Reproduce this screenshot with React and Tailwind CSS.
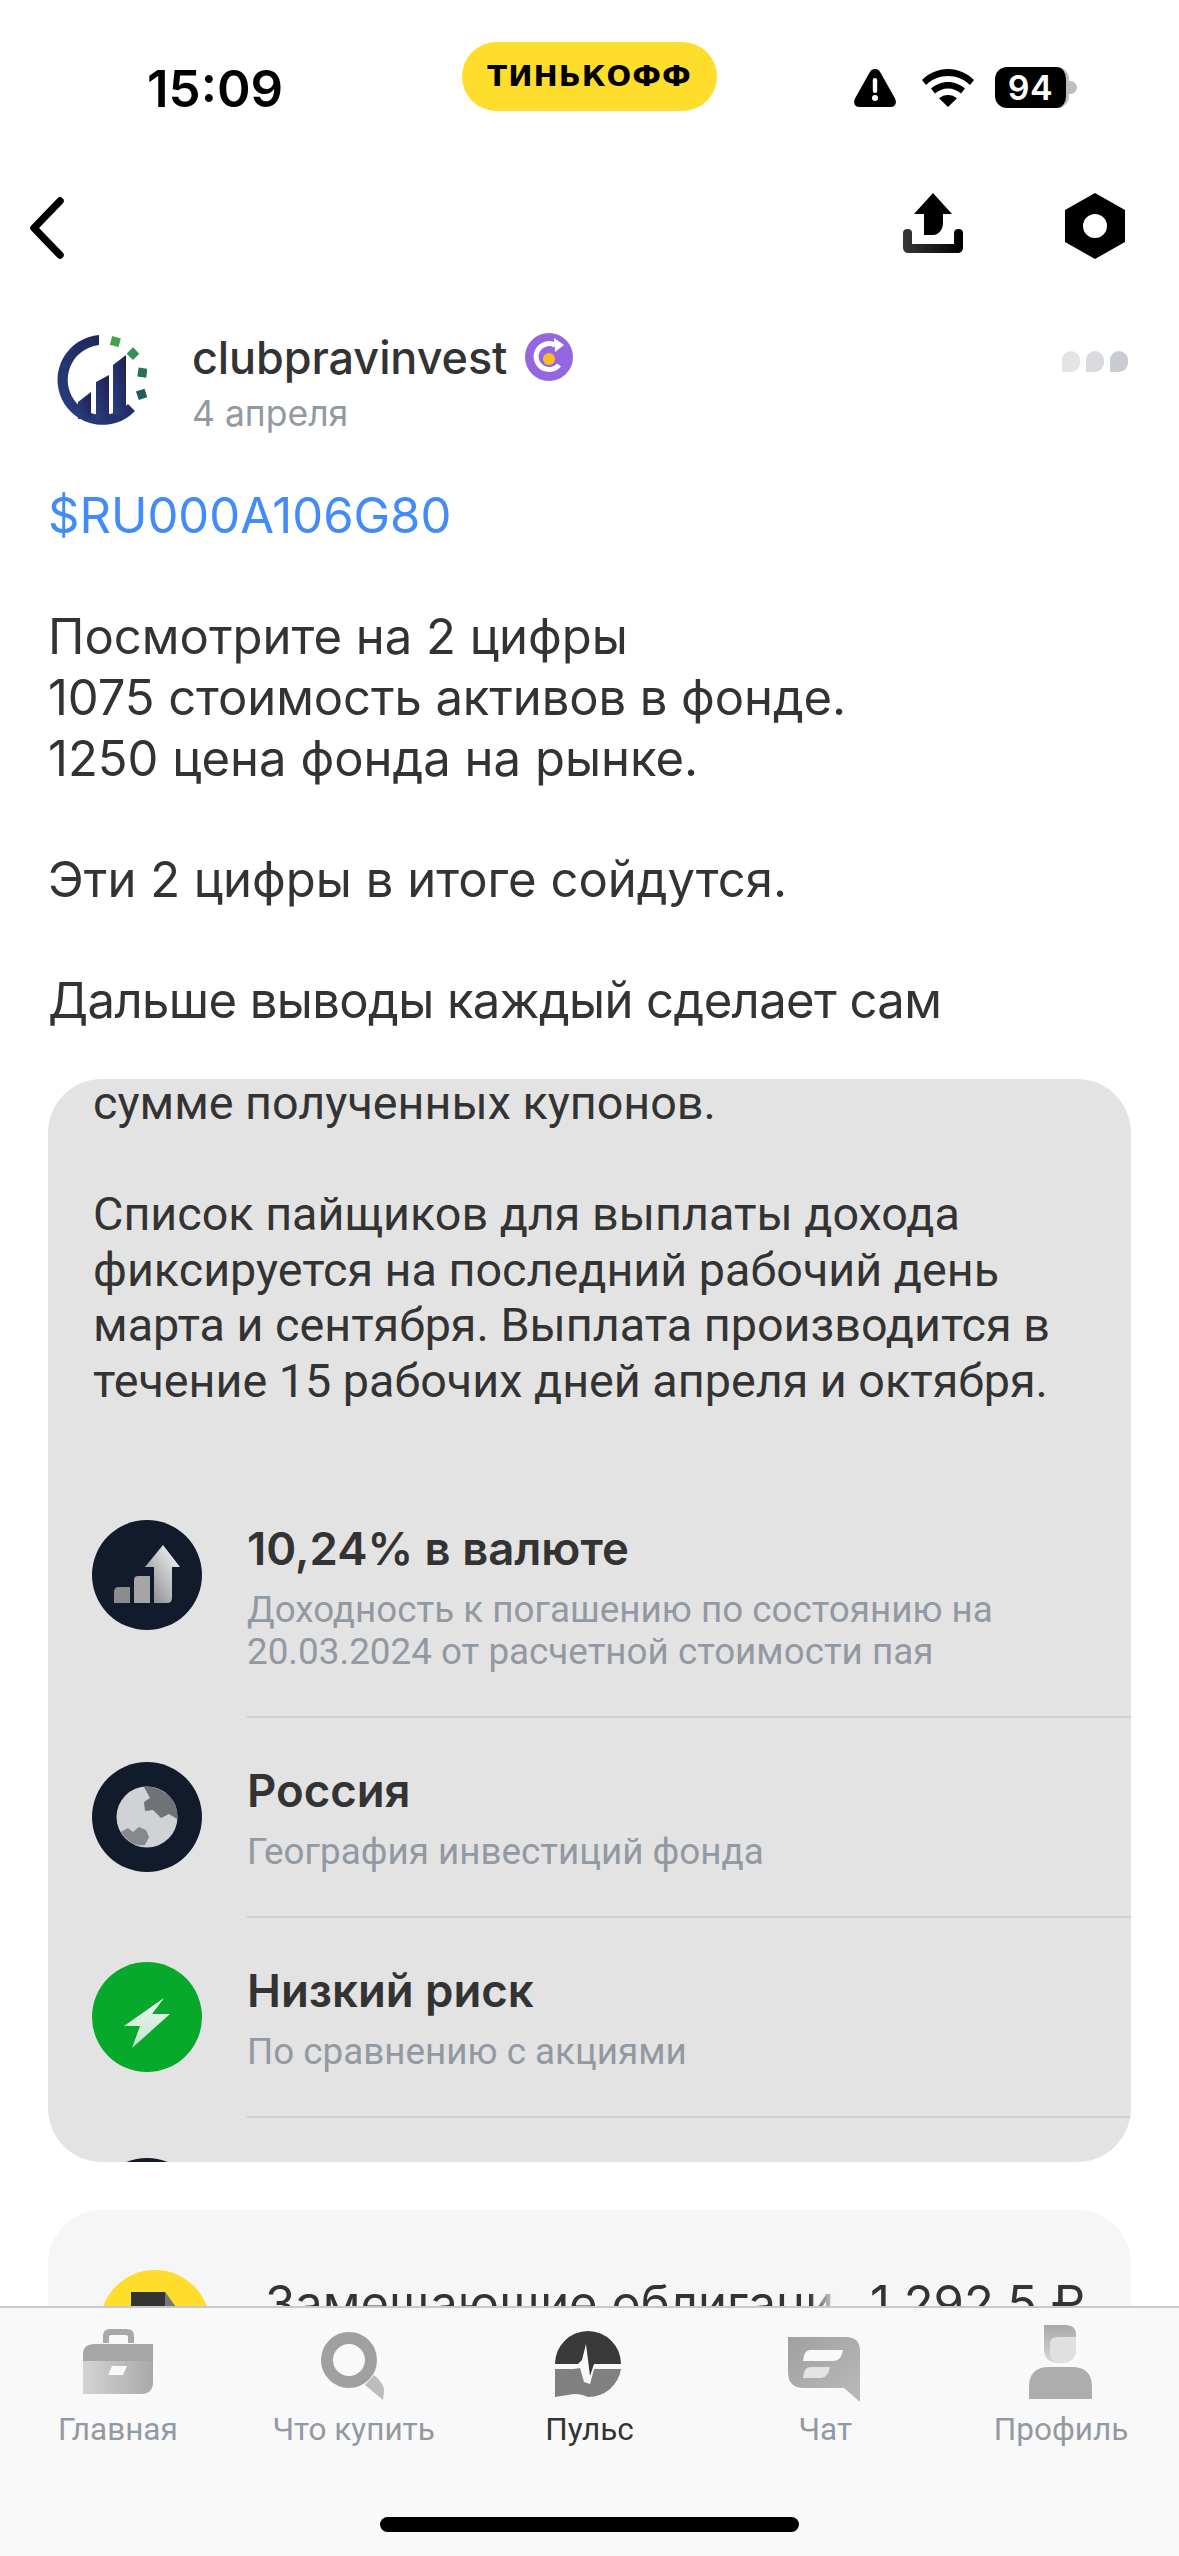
import React from "react";

function Row({ icon, title, sub, first }) {
  return (
    <div className={"flex " + (first ? "mt-[67px]" : "")}>
      <div className="w-[199px] shrink-0 pl-[44px] pt-[44px]">{icon}</div>
      <div className="flex-1 border-b-[2px] border-[#cfcfcf] pt-[47px] pb-[43px]">
        <div className="font-['Inter',sans-serif] text-[45.500px] leading-[52px] font-semibold text-[#333]">{title}</div>
        <div className="mt-[14px] text-[36.800px] leading-[42px] text-[#9299a2]">{sub}</div>
      </div>
    </div>
  );
}

function Circle({ className, children }) {
  return <div className={"w-[110px] h-[110px] rounded-full overflow-hidden " + className}>{children}</div>;
}

function Tab({ label, active, children }) {
  return (
    <div className="flex flex-col items-center">
      <svg width="90" height="80" viewBox="0 0 90 80">{children}</svg>
      <div className={"mt-[8px] font-['Roboto',sans-serif] text-[31.500px] leading-[36px] " + (active ? "text-[#333]" : "text-[#9299a2]")}>{label}</div>
    </div>
  );
}

export default function App() {
  return (
    <div className="relative w-[1179px] h-[2556px] overflow-hidden bg-white font-['Inter','Noto_Sans',sans-serif] text-[#333]">
      {/* status bar */}
      <div className="flex items-start h-[166px]">
        <div className="w-[462px] shrink-0 pl-[147px] pt-[59px] text-[51px] leading-[60px] font-semibold text-black">15:09</div>
        <div className="mt-[42px] w-[255px] h-[69px] shrink-0 rounded-full bg-[#ffdd2d] flex items-center justify-center font-['DejaVu_Sans',sans-serif] text-[29px] font-bold tracking-[1px] text-black">ТИНЬКОФФ</div>
        <div className="ml-[136px] mt-[67px] h-[41px] flex items-center">
          <svg width="44" height="38" viewBox="0 0 44 38"><path d="M22 0c3 0 4.500 2 6 4.500l14 25c2 4 .5 8.500-4 8.500H6c-4.500 0-6-4.500-4-8.500l14-25C17.500 2 19 0 22 0z" fill="#000"/><rect x="19.800" y="9" width="4.400" height="15" rx="2.200" fill="#fff"/><circle cx="22" cy="29" r="3" fill="#fff"/></svg>
          <svg className="ml-[25px]" width="52" height="38" viewBox="0 0 52 38"><path d="M26 0c10 0 19 4 26 11l-4 5C42 10 34 7 26 7S10 10 4 16l-4-5C7 4 16 0 26 0z" fill="#000"/><path d="M26 13c6.500 0 12 2.500 17 6.500l-4 5c-3.500-3-8-5-13-5s-9.500 2-13 5l-4-5c5-4 10.500-6.500 17-6.500z" fill="#000"/><path d="M26 26c3.500 0 6.500 1.200 9 3.300L26 38l-9-8.700c2.500-2.100 5.500-3.300 9-3.300z" fill="#000"/></svg>
          <div className="ml-[21px] w-[74px] h-[41px] rounded-[12px] bg-black border-r-[3px] border-[#bdbdbd] flex items-center justify-center text-[34px] leading-[41px] font-semibold tracking-[0.5px] text-white">94</div>
          <div className="w-[8px] h-[13px] rounded-r-full bg-[#bdbdbd]"></div>
        </div>
      </div>

      {/* nav */}
      <div className="flex items-start h-[120px] pt-[27px]">
        <svg className="ml-[27px] mt-[3px]" width="40" height="64" viewBox="0 0 40 64"><path d="M33 5 7 32l26 27" fill="none" stroke="#000" strokeWidth="7.500" strokeLinecap="round" strokeLinejoin="round"/></svg>
        <svg className="ml-[836px]" width="60" height="60" viewBox="0 0 60 60">
          <defs><linearGradient id="tray" x1="0" y1="0" x2="1" y2="0"><stop offset="0" stopColor="#383838"/><stop offset="1" stopColor="#000"/></linearGradient></defs>
          <path d="M30 0 49 21H40V30C40 36 36 42 30 42H21V21H11z" fill="#000"/>
          <path d="M0 40c0-2.500 1.500-4 4.500-4S9 37.500 9 40v11h42V40c0-2.500 1.500-4 4.500-4s4.500 1.500 4.500 4v14c0 4-2 6-6 6H6c-4 0-6-2-6-6z" fill="url(#tray)"/>
        </svg>
        <svg className="ml-[102px]" width="60" height="66" viewBox="0 0 60 66"><path fillRule="evenodd" d="M30 0 60 17V49L30 66 0 49V17zM30 21a12 12 0 1 0 0 24 12 12 0 0 0 0-24z" fill="#000"/></svg>
      </div>

      {/* author */}
      <div className="flex items-start pt-[49px] pl-[57px] pr-[51px]">
        <svg className="shrink-0" width="90" height="90" viewBox="0 0 90 90">
          <defs><linearGradient id="lg" x1="0" y1="1" x2="1" y2="0"><stop offset="0" stopColor="#2b4084"/><stop offset="1" stopColor="#1d1f4e"/></linearGradient></defs>
          <path d="M42 0A45 45 0 1 0 78 76L71 69A35 35 0 1 1 42 10Z" fill="url(#lg)"/>
          <path d="M21 67 34 57V84H21z" fill="url(#lg)"/>
          <path d="M39 47 52 40V84H39z" fill="url(#lg)"/>
          <path d="M56 30 69 20V80H56z" fill="url(#lg)"/>
          <rect x="54" y="2" width="9" height="9" transform="rotate(15 58 6)" fill="#44a347"/>
          <rect x="72" y="14" width="9" height="9" transform="rotate(45 76 18)" fill="#3a8f58"/>
          <rect x="81" y="33" width="9" height="9" transform="rotate(8 85 37)" fill="#2b6e5b"/>
          <rect x="80" y="55" width="9" height="9" transform="rotate(-18 84 59)" fill="#235a5c"/>
        </svg>
        <div className="ml-[45px] -mt-[3px]">
          <div className="flex items-center h-[52px]">
            <span className="text-[45px] leading-[52px] font-medium tracking-[-0.1px] text-[#333]">clubpravinvest</span>
            <svg className="ml-[18px] -mt-[2px]" width="48" height="48" viewBox="0 0 48 48"><circle cx="24" cy="24" r="24" fill="#9467e0"/><path d="M34 32A13 13 0 1 1 30 12" fill="none" stroke="#fff" strokeWidth="5"/><path d="M29 5l10 7-9 7z" fill="#fff"/><circle cx="24" cy="26" r="6" fill="#fcbc23"/></svg>
          </div>
          <div className="mt-[9px] text-[35.500px] leading-[42px] text-[#9299a2]">4 апреля</div>
        </div>
        <div className="ml-auto mt-[16px] flex gap-[6px]">
          <div className="w-[18px] h-[21px] rounded-t-[9px] rounded-br-[9px] bg-[#e3e4e6]"></div>
          <div className="w-[18px] h-[21px] rounded-t-[9px] rounded-br-[9px] bg-[#d8dadd]"></div>
          <div className="w-[18px] h-[21px] rounded-t-[9px] rounded-br-[9px] bg-[#c9ccd1]"></div>
        </div>
      </div>

      {/* post */}
      <div className="px-[48px] mt-[50px] text-[49px] leading-[61px] text-[#333]">
        <div className="text-[#428bf9]">$RU000A106G80</div>
        <div className="h-[60px]"></div>
        <div>Посмотрите на 2 цифры</div>
        <div className="tracking-[-0.1px]">1075 стоимость активов в фонде.</div>
        <div>1250 цена фонда на рынке.</div>
        <div className="h-[60px]"></div>
        <div>Эти 2 цифры в итоге сойдутся.</div>
        <div className="h-[60px]"></div>
        <div className="tracking-[-0.6px]">Дальше выводы каждый сделает сам</div>
      </div>

      {/* image card */}
      <div className="mx-[48px] mt-[48px] h-[1083px] rounded-[54px] bg-[#e3e3e3] overflow-hidden font-['Roboto',sans-serif]">
        <div className="px-[45px] pt-[2px] text-[46.700px] leading-[55.500px] text-[#333]">
          <div className="leading-[44px]">сумме полученных купонов.</div>
          <div className="h-[62px]"></div>
          <div>Список пайщиков для выплаты дохода</div>
          <div>фиксируется на последний рабочий день</div>
          <div>марта и сентября. Выплата производится в</div>
          <div>течение 15 рабочих дней апреля и октября.</div>
        </div>
        <Row
          first
          title="10,24% в валюте"
          sub={<>Доходность к погашению по состоянию на<br />20.03.2024 от расчетной стоимости пая</>}
          icon={
            <Circle className="bg-[#121b2c]">
              <svg width="110" height="110" viewBox="0 0 110 110">
                <defs><linearGradient id="up" x1="0" y1="1" x2="1" y2="0"><stop offset="0" stopColor="#7d7f84"/><stop offset="1" stopColor="#ffffff"/></linearGradient></defs>
                <path d="M22 72q0-5 5-5h11v16H22z" fill="#8a8c90"/>
                <path d="M42 60q0-4 4-4h12v27H42z" fill="#a4a5a8"/>
                <path d="M71 25 88 47H80V78q0 5-5 5H62V47H53z" fill="url(#up)"/>
              </svg>
            </Circle>
          }
        />
        <Row
          title="Россия"
          sub="География инвестиций фонда"
          icon={
            <Circle className="bg-[#121b2c]">
              <svg width="110" height="110" viewBox="0 0 110 110">
                <circle cx="55" cy="55" r="30.500" fill="#d0d2d5"/>
                <path d="M52 25c5-2 20 2 28 12 4 5 6 12 5 20l-8-5-8 4-8-8-8 1-1-9 6-4z" fill="#6f7276"/>
                <path d="M29 70l7-4 5 4 6-5 7 3 3 7-4 8c-10 2-19-5-24-13z" fill="#85888c"/>
              </svg>
            </Circle>
          }
        />
        <Row
          title="Низкий риск"
          sub="По сравнению с акциями"
          icon={
            <Circle className="bg-[#07a92c]">
              <svg width="110" height="110" viewBox="0 0 110 110">
                <defs><linearGradient id="bolt" x1="0" y1="0" x2="0" y2="1"><stop offset="0" stopColor="#f0f8f2"/><stop offset="1" stopColor="#c2e4ca"/></linearGradient></defs>
                <path d="M72 36 32 64H48L40 86 78 52H60z" fill="url(#bolt)"/>
              </svg>
            </Circle>
          }
        />
        <div className="pl-[44px] pt-[40px]"><Circle className="bg-[#121b2c]" /></div>
      </div>

      {/* second card */}
      <div className="mx-[48px] mt-[48px] h-[240px] rounded-[54px] bg-[#f6f6f6] overflow-hidden flex items-start pt-[60px] pl-[52px]">
        <div className="shrink-0 w-[110px] h-[110px] rounded-full bg-[#ffdd2d] flex justify-center pt-[22px]">
          <svg width="48" height="60" viewBox="0 0 48 60"><path d="M0 0H34L48 20V60H0z" fill="#333"/><path d="M34 0 48 20H34z" fill="#777"/></svg>
        </div>
        <div className="relative ml-[55px] mt-[3px] w-[574px] overflow-hidden whitespace-nowrap text-[49px] leading-[61px] text-[#333]">
          Замещающие облигации
          <div className="absolute right-0 top-0 bottom-0 w-[30px] bg-gradient-to-r from-transparent to-[#f6f6f6]"></div>
        </div>
        <div className="ml-[31px] mt-[3px] whitespace-nowrap text-[49px] leading-[61px] text-[#333]">1 292,5 ₽</div>
      </div>

      {/* tab bar */}
      <div className="absolute left-0 right-0 bottom-0 h-[250px] bg-[#f9f9f9] border-t-[2px] border-[#c9c9c9] pt-[16px] grid grid-cols-5">
        <Tab label="Главная">
          <defs><linearGradient id="case" x1="0" y1="0" x2="1" y2="0"><stop offset="0" stopColor="#d4d4d4"/><stop offset="1" stopColor="#a9a9a9"/></linearGradient></defs>
          <path d="M30 19V12q0-7 7-7h17q7 0 7 7v7h-6v-6q0-2-2-2H38q-2 0-2 2v6z" fill="#a8a8a8"/>
          <path d="M10 36V30Q10 20 22 20H80V37H10z" fill="#a6a6a6"/>
          <path d="M10 37H80V58Q80 70 68 70H10z" fill="url(#case)"/>
          <path d="M39 42H54L50 51H35z" fill="#f9f9f9"/>
        </Tab>
        <Tab label="Что купить">
          <circle cx="40" cy="36" r="22" fill="none" stroke="#a0a0a0" strokeWidth="12"/>
          <path d="M56 61 65 51Q76 60 75 68L74 76z" fill="#bdbdbd"/>
        </Tab>
        <Tab label="Пульс" active>
          <path d="M11 40A33 33 0 0 1 77 40H50L46 52 42 20 38 36 34 40z" fill="#3a3a3a"/>
          <path d="M11 45H30L36 44 40 58 46 60 50 45H77A33 33 0 0 1 44 73Q38 70 30 70L11 73z" fill="#808080"/>
        </Tab>
        <Tab label="Чат">
          <defs><linearGradient id="chat" x1="0" y1="0" x2="1" y2="1"><stop offset="0" stopColor="#a0a0a0"/><stop offset="1" stopColor="#bababa"/></linearGradient></defs>
          <path d="M8 13H66Q80 13 80 27V78L64 64H24Q8 64 8 48z" fill="url(#chat)"/>
          <path d="M30 26H63Q61 37 54 37H23Q24 26 30 26z" fill="#f9f9f9"/>
          <path d="M30 43H50Q48 54 41 54H23Q24 43 30 43z" fill="#e3e3e3"/>
        </Tab>
        <Tab label="Профиль">
          <defs><linearGradient id="face" x1="0" y1="0" x2="0" y2="1"><stop offset="0" stopColor="#a8a8a8"/><stop offset="1" stopColor="#d8d8d8"/></linearGradient></defs>
          <path d="M28 1H50Q60 1 60 11V25Q60 39 44 39 28 39 28 25z" fill="url(#face)"/>
          <path d="M34 19Q34 13 42 13H60V25Q60 39 44 39 34 39 34 28z" fill="#e0e0e0"/>
          <path d="M13 75V63Q13 43 33 43H56Q76 43 76 63V75z" fill="#adadad"/>
        </Tab>
        <div className="absolute left-[380px] top-[209px] w-[419px] h-[15px] rounded-full bg-black"></div>
      </div>
    </div>
  );
}
